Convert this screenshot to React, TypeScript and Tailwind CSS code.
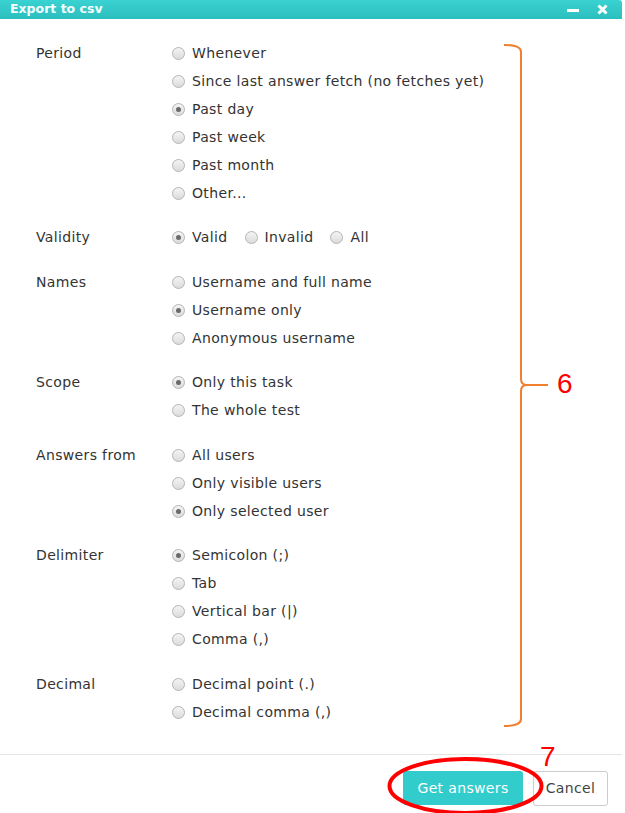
import React from 'react';

type Group = { label: string; options: string[]; checked: number; inline?: boolean };

const GROUPS: Group[] = [
  {
    label: 'Period',
    options: ['Whenever', 'Since last answer fetch (no fetches yet)', 'Past day', 'Past week', 'Past month', 'Other...'],
    checked: 2,
  },
  { label: 'Validity', options: ['Valid', 'Invalid', 'All'], checked: 0, inline: true },
  { label: 'Names', options: ['Username and full name', 'Username only', 'Anonymous username'], checked: 1 },
  { label: 'Scope', options: ['Only this task', 'The whole test'], checked: 0 },
  { label: 'Answers from', options: ['All users', 'Only visible users', 'Only selected user'], checked: 2 },
  { label: 'Delimiter', options: ['Semicolon (;)', 'Tab', 'Vertical bar (|)', 'Comma (,)'], checked: 0 },
  // nothing picked yet for the decimal mark
  { label: 'Decimal', options: ['Decimal point (.)', 'Decimal comma (,)'], checked: -1 },
];

function Radio({ checked }: { checked: boolean }) {
  return (
    <span className="flex h-[13px] w-[13px] shrink-0 items-center justify-center rounded-full border border-[#b4b4b4] bg-gradient-to-b from-[#f4f4f4] to-[#dcdcdc]">
      {checked && <span className="h-[5px] w-[5px] rounded-full bg-[#6a6a6a]" />}
    </span>
  );
}

function Option({ text, checked }: { text: string; checked: boolean }) {
  return (
    <label className="flex h-[28px] items-center gap-[7px]">
      <Radio checked={checked} />
      <span>{text}</span>
    </label>
  );
}

export default function App() {
  return (
    <div className="relative h-[813px] w-[625px] overflow-hidden bg-white font-['DejaVu_Sans',sans-serif] text-[14px] tracking-[0.35px] text-[#333]">
      <div className="w-[622px]">
        <div className="flex h-[19px] items-center justify-between rounded-tr-[3px] bg-gradient-to-b from-[#3ad2d2] to-[#2cbebe] pl-[10px] pr-[14px] text-white">
          <span className="text-[12.5px] font-bold tracking-normal text-[#f4ffff]">Export to csv</span>
          <div className="flex items-center gap-[18px]">
            <span className="mt-[2px] h-[3px] w-[12px] bg-white" />
            <svg width="11" height="11" viewBox="0 0 11 11">
              <path d="M1.5 1.5L9.5 9.5M9.5 1.5L1.5 9.5" stroke="white" strokeWidth="3" />
            </svg>
          </div>
        </div>

        <div className="flex flex-col gap-[16.5px] pl-[36px] pt-[20px]">
          {GROUPS.map((g) => (
            <div key={g.label} className="flex">
              <div className="flex h-[28px] w-[136px] items-center">{g.label}</div>
              <div className={g.inline ? 'flex gap-[17px]' : 'flex flex-col'}>
                {g.options.map((o, i) => (
                  <Option key={o} text={o} checked={i === g.checked} />
                ))}
              </div>
            </div>
          ))}
        </div>

        <div className="mt-[28px] border-t border-[#e5e5e5]" />
        <div className="flex justify-end gap-[10px] pr-[14px] pt-[16px]">
          <button className="h-[34px] w-[120px] rounded-[3px] bg-[#33cccc] text-[14px] text-white">Get answers</button>
          <button className="h-[35px] w-[75px] rounded-[3px] border border-[#cccccc] bg-white text-[14px] text-[#444]">
            Cancel
          </button>
        </div>
      </div>

      {/* annotations */}
      <svg className="pointer-events-none absolute left-0 top-0" width="625" height="813" viewBox="0 0 625 813">
        <path
          d="M504 45 Q521 45 521 52 L521 379 Q521 385 527 385 L548 385 M527 385 Q521 385 521 391 L521 719 Q521 726 504 726"
          fill="none"
          stroke="#f07f30"
          strokeWidth="2"
        />
        <ellipse cx="465.5" cy="786" rx="76" ry="27" fill="none" stroke="#ff0000" strokeWidth="4" />
      </svg>
      <span className="absolute left-[557px] top-[370px] font-['Liberation_Sans',sans-serif] text-[28px] leading-none text-[#ff0000]">
        6
      </span>
      <span className="absolute left-[540px] top-[743px] font-['Liberation_Sans',sans-serif] text-[28px] leading-none text-[#ff0000]">
        7
      </span>
    </div>
  );
}
